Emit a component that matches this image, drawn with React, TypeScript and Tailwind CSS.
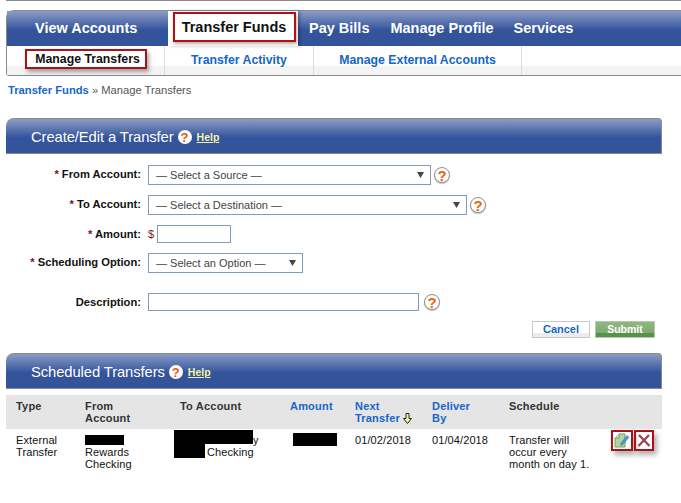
import React from "react";

function HelpIcon({ filled = false }: { filled?: boolean }) {
  return (
    <span
      className={
        filled
          ? "inline-flex h-[14px] w-[14px] items-center justify-center rounded-full bg-white text-[13px] font-bold leading-none text-[#e8590c]"
          : "inline-flex h-[16px] w-[16px] items-center justify-center rounded-full border border-[#8f8f8f] bg-white text-[15px] font-bold leading-none text-[#e8650f] shadow-[0_1px_1px_rgba(0,0,0,0.25)]"
      }
    >
      ?
    </span>
  );
}

function Caret() {
  return (
    <svg width="7" height="6" viewBox="0 0 7 6" className="pointer-events-none absolute right-[7px] top-[7px]">
      <path d="M0 0H7L3.500 6Z" fill="#444" />
    </svg>
  );
}

function Select({ width, label }: { width: string; label: string }) {
  return (
    <div className={`relative h-[20px] ${width}`}>
      <select className="block h-full w-full appearance-none border border-[#7f9db9] bg-white pl-[7px] text-[11px] leading-[18px] text-[#444] outline-none">
        <option>{label}</option>
      </select>
      <Caret />
    </div>
  );
}

function Label({ children, star = false, className = "" }: { children: React.ReactNode; star?: boolean; className?: string }) {
  return (
    <div className={`w-[142px] shrink-0 pr-[7px] text-right text-[11.2px] font-bold leading-[14px] text-[#111] ${className}`}>
      {star && <span className="text-[#7a1030]">* </span>}
      {children}
    </div>
  );
}

function PanelHeader({ title }: { title: string }) {
  return (
    <div className="flex h-[36px] items-center gap-[4px] rounded-tl-[8px] rounded-tr-[4px] border-b border-r border-t border-[#8a8a8a] bg-[linear-gradient(#8b9dc6,#33539b_55%,#33539b)] pl-[25px] pt-[2px] text-white">
      <span className="text-[14.8px] leading-none tracking-[-0.1px]">{title}</span>
      <HelpIcon filled />
      <span className="ml-px text-[10.5px] font-bold leading-none text-[#f4f4a8] underline">Help</span>
    </div>
  );
}

export default function App() {
  const headBlack = "text-[11px] font-bold leading-[12px] tracking-[0.2px] text-[#333]";
  const headBlue = "text-[11px] font-bold leading-[12px] tracking-[0.2px] text-[#1566c9]";
  const cell = "text-[11px] leading-[12px] tracking-[0.1px] text-[#111]";
  return (
    <div className="h-[503px] w-[681px] overflow-hidden bg-white pl-[6px] font-['Liberation_Sans',Arial,sans-serif]">
      <div className="h-px bg-[#8a8a8a]" />

      <nav className="mt-[9px] h-[66px] rounded-tl-[8px] rounded-bl-[3px] border-b border-l border-t border-[#8a8a8a]">
        <div className="flex h-[35px] bg-[linear-gradient(#8b9dc6,#33539b_55%,#33539b)] text-[14.5px] font-bold text-white">
          <div className="flex w-[161px] items-center pl-[28px]">View Accounts</div>
          <div className="flex h-[35px] w-[130px] justify-center bg-white pl-[2px] shadow-[2px_0_3px_rgba(0,0,0,0.25)]">
            <div className="mt-px flex h-[30px] w-[123px] items-center justify-center border-2 border-[#b00f16] pt-[2px] text-[#111] shadow-[1px_2px_3px_rgba(0,0,0,0.3)]">
              Transfer Funds
            </div>
          </div>
          <div className="ml-[11px] flex items-center">Pay Bills</div>
          <div className="ml-[21px] flex items-center">Manage Profile</div>
          <div className="ml-[20px] flex items-center">Services</div>
        </div>
        <div className="flex h-[29px] bg-[linear-gradient(#ffffff_69%,#f3f3f3_69%)] text-[12.3px] font-bold text-[#1566c9]">
          <div className="flex w-[158px] items-center border-r border-[#dcdcdc] pl-[18px]">
            <div className="-mt-[3px] flex h-[20px] w-[122px] items-center justify-center border-2 border-[#b00f16] bg-white pl-[3px] pt-[1px] text-[#111] shadow-[2px_3px_4px_rgba(0,0,0,0.35)]">
              Manage Transfers
            </div>
          </div>
          <div className="flex w-[149px] items-center justify-center border-r border-[#dcdcdc]">Transfer Activity</div>
          <div className="flex w-[208px] items-center justify-center border-r border-[#dcdcdc]">Manage External Accounts</div>
        </div>
      </nav>

      <div className="ml-[2px] mt-[8px] text-[11.2px] leading-[13px] text-[#555]">
        <span className="font-bold text-[#1566c9]">Transfer Funds</span> » Manage Transfers
      </div>

      <section className="mr-[19px] mt-[21px]">
        <PanelHeader title="Create/Edit a Transfer" />
        <div className="mt-[11px] flex flex-col">
          <div className="flex h-[20px] items-center">
            <Label star className="-mt-[2px]">From Account:</Label>
            <Select width="w-[283px]" label="— Select a Source —" />
            <span className="ml-[3px] flex"><HelpIcon /></span>
          </div>
          <div className="mt-[10px] flex h-[20px] items-center">
            <Label star className="-mt-[2px]">To Account:</Label>
            <Select width="w-[319px]" label="— Select a Destination —" />
            <span className="ml-[3px] flex"><HelpIcon /></span>
          </div>
          <div className="mt-[10px] flex h-[18px] items-center">
            <Label star>Amount:</Label>
            <span className="w-[9px] text-[11px] text-[#7a2020]">$</span>
            <input className="h-[18px] w-[74px] border border-[#7f9db9] bg-white outline-none" />
          </div>
          <div className="mt-[10px] flex h-[20px] items-center">
            <Label star className="-mt-[2px]">Scheduling Option:</Label>
            <Select width="w-[155px]" label="— Select an Option —" />
          </div>
          <div className="mt-[20px] flex h-[18px] items-center">
            <Label>Description:</Label>
            <input className="h-[18px] w-[271px] border border-[#7f9db9] bg-white outline-none" />
            <span className="ml-[5px] flex"><HelpIcon /></span>
          </div>
          <div className="mr-[7px] mt-[10px] flex justify-end gap-[5px]">
            <button className="h-[17px] w-[58px] border border-[#c8c8c8] bg-[linear-gradient(#ffffff_70%,#ececec_70%)] text-[11px] font-bold leading-none text-[#1566c9]">
              Cancel
            </button>
            <button className="h-[17px] w-[60px] border border-[#b9c9b0] bg-[linear-gradient(#8fb880,#7dab6d_70%,#56924a_70%)] text-[10.5px] font-bold leading-none text-white">
              Submit
            </button>
          </div>
        </div>
      </section>

      <section className="mr-[19px] mt-[15px]">
        <PanelHeader title="Scheduled Transfers" />
        <div className="mt-[6px] grid h-[34px] grid-cols-[69px_95px_110px_65px_77px_77px_1fr] bg-[#e5e5e5] pl-[10px] pt-[5px]">
          <div className={headBlack}>Type</div>
          <div className={headBlack}>From<br />Account</div>
          <div className={headBlack}>To Account</div>
          <div className={headBlue}>Amount</div>
          <div className={headBlue}>
            Next<br />
            <span className="inline-flex items-center gap-[3px]">
              Transfer
              <svg width="9" height="11" viewBox="0 0 9 11">
                <path d="M3 .5H6V5.500H8.500L4.500 10.500L.5 5.500H3Z" fill="#fbf7a0" stroke="#222" strokeWidth="1" />
              </svg>
            </span>
          </div>
          <div className={headBlue}>Deliver<br />By</div>
          <div className={headBlack}>Schedule</div>
        </div>
        <div className="grid grid-cols-[69px_95px_110px_65px_77px_77px_102px_1fr] pl-[10px] pt-[5px]">
          <div className={cell}>External<br />Transfer</div>
          <div className={cell}>
            <span className="mt-px block h-[10px] w-[39px] bg-black" />
            <span className="mt-px block">Rewards</span>
            Checking
          </div>
          <div className={`relative ${cell}`}>
            <span className="absolute -left-[6px] -top-[4px] h-[14px] w-[79px] bg-black" />
            <span className="absolute -left-[6px] top-[10px] h-[14px] w-[31px] bg-black" />
            <span className="block pl-[73px]">y</span>
            <span className="block pl-[27px]">Checking</span>
          </div>
          <div className={`relative ${cell}`}>
            <span className="absolute left-[3px] -top-px h-[13px] w-[44px] bg-black" />
          </div>
          <div className={cell}>01/02/2018</div>
          <div className={cell}>01/04/2018</div>
          <div className={cell}>Transfer will<br />occur every<br />month on day 1.</div>
          <div className="-mt-[4px] flex">
            <div className="flex h-[21px] w-[22px] items-center justify-center border-2 border-[#b00f16] shadow-[3px_4px_5px_rgba(0,0,0,0.3)]">
              <svg width="16" height="15" viewBox="0 0 16 15">
                <path d="M1 5L5 1H11V14H1Z" fill="#b5d2a5" stroke="#6f9f68" />
                <path d="M5 1V5H1" fill="#d8e8cf" stroke="#6f9f68" />
                <path d="M6.500 10.500L13 2.500L15 4.200L8.500 12L6 12.500Z" fill="#4a9bd4" stroke="#2d6ea5" strokeWidth=".5" />
                <circle cx="5.500" cy="12.500" r="1.200" fill="#f0c93a" />
              </svg>
            </div>
            <div className="ml-px flex h-[21px] w-[20px] items-center justify-center border-2 border-[#b00f16] shadow-[3px_4px_5px_rgba(0,0,0,0.3)]">
              <svg width="14" height="13" viewBox="0 0 14 13">
                <path d="M2 1L12.500 12M12 1L1.500 12" stroke="#9a4652" strokeWidth="2.300" />
              </svg>
            </div>
          </div>
        </div>
      </section>
    </div>
  );
}
